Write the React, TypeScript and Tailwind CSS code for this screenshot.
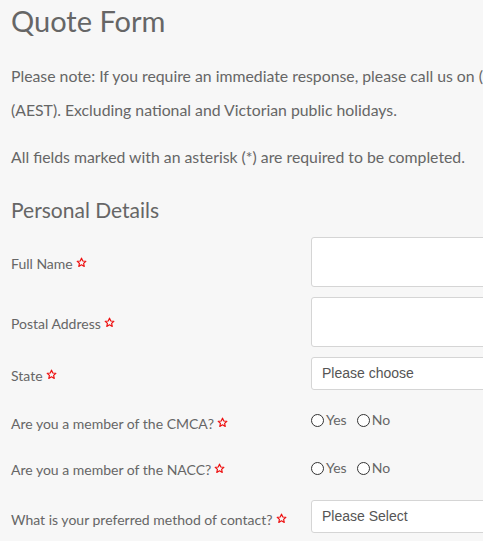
export default function App() {
  const star = (
    <svg viewBox="0 0 24 24" className="inline-block ml-[3px] w-[11px] h-[11px] align-[1px]">
      <path
        d="M12 2.5l2.9 6.2 6.6.7-4.9 4.5 1.4 6.6L12 17.1l-5.9 3.4 1.4-6.6-4.9-4.5 6.6-.7z"
        fill="none"
        stroke="#ee1111"
        strokeWidth="2.6"
        strokeLinejoin="round"
      />
    </svg>
  );

  const Radio = ({ label }: { label: string }) => (
    <label className="flex items-center mr-[10px]">
      <span className="w-[13px] h-[13px] rounded-full border border-[#333] bg-white mr-[2px]" />
      <span>{label}</span>
    </label>
  );

  return (
    <div className="min-h-[541px] w-[483px] overflow-hidden bg-[#f7f7f7] text-[#666] font-['Lato','Open_Sans',sans-serif]">
      <div className="w-[1000px] pl-[11px]">
        <h1 className="text-[29px] leading-[41px] text-[#666]">Quote Form</h1>

        <p className="mt-[18px] text-[15.8px] leading-[34px] whitespace-nowrap">
          Please note: If you require an immediate response, please call us on (<a className="text-[#d4a017]">03 9000 0000</a>) between 9am and 5pm, Monday to Friday
          <br />
          (AEST). Excluding national and Victorian public holidays.
        </p>

        <p className="mt-[20px] text-[15.8px] leading-[20px]">
          All fields marked with an asterisk (*) are required to be completed.
        </p>

        <h2 className="mt-[28px] text-[21px] leading-[30px]">Personal Details</h2>

        <div className="mt-[12px] flex flex-col text-[14px]">
          <div className="flex items-center h-[50px]">
            <div className="w-[300px] pt-[3px]">Full Name{star}</div>
            <div className="h-[50px] w-[300px] bg-white border border-[#d5d5d5] rounded-[3px]" />
          </div>

          <div className="flex items-center h-[50px] mt-[10px]">
            <div className="w-[300px] pt-[3px]">Postal Address{star}</div>
            <div className="h-[50px] w-[300px] bg-white border border-[#d5d5d5] rounded-[3px]" />
          </div>

          <div className="flex items-center h-[33px] mt-[10px]">
            <div className="w-[300px] pt-[3px]">State{star}</div>
            <div className="h-[33px] w-[300px] bg-white border border-[#d5d5d5] rounded-[3px] flex items-center pl-[10px] text-[14px] text-[#555] font-['Liberation_Sans',Arial,sans-serif]">
              Please choose
            </div>
          </div>

          <div className="flex items-start h-[48px] mt-[22px]">
            <div className="w-[300px] pt-[2px] leading-[20px]">Are you a member of the CMCA?{star}</div>
            <div className="flex items-center leading-[16px]">
              <Radio label="Yes" />
              <Radio label="No" />
            </div>
          </div>

          <div className="flex items-start h-[40px]">
            <div className="w-[300px] leading-[20px]">Are you a member of the NACC?{star}</div>
            <div className="flex items-center leading-[16px]">
              <Radio label="Yes" />
              <Radio label="No" />
            </div>
          </div>

          <div className="flex items-center h-[33px]">
            <div className="w-[300px] pt-[6px]">What is your preferred method of contact?{star}</div>
            <div className="h-[33px] w-[300px] bg-white border border-[#d5d5d5] rounded-[3px] flex items-center pl-[10px] text-[14px] text-[#555] font-['Liberation_Sans',Arial,sans-serif]">
              Please Select
            </div>
          </div>
        </div>
      </div>
    </div>
  );
}
